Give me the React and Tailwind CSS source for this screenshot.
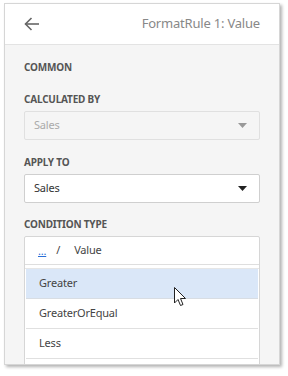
import React from "react";

const font = { fontFamily: '"Noto Sans", "Open Sans", sans-serif' };

const Caret = ({ color }) => (
  <svg width="9" height="5" viewBox="0 0 9 5">
    <polygon points="0,0 9,0 4.5,5" fill={color} />
  </svg>
);

const Label = ({ children }) => (
  <div className="h-[14px] text-[10px] leading-[14px] font-bold text-[#555] tracking-[-0.2px]">
    {children}
  </div>
);

const App = () => {
  return (
    <div
      className="w-[288px] h-[376px] bg-white pt-[3px] pl-[4px] relative overflow-hidden"
      style={font}
    >
      <div className="w-[276px] h-[362px] bg-[#f5f5f5] border border-[#d6d6d6] shadow-[2px_2px_3px_rgba(0,0,0,0.3)] flex flex-col overflow-hidden">
        {/* Header */}
        <div className="h-[41px] shrink-0 bg-white border-b border-[#e3e3e3] flex items-center justify-between pl-[19px] pr-[19px]">
          <svg width="16" height="14" viewBox="0 0 16 14" fill="none" stroke="#666" strokeWidth="1.6">
            <line x1="1.5" y1="7" x2="15" y2="7" />
            <polyline points="7.5,1 1.5,7 7.5,13" />
          </svg>
          <span className="text-[13px] tracking-[-0.2px] text-[#888]">FormatRule 1: Value</span>
        </div>

        {/* Body */}
        <div className="px-[19px] flex flex-col">
          <div className="mt-[15px]">
            <Label>COMMON</Label>
          </div>

          <div className="mt-[18px]">
            <Label>CALCULATED BY</Label>
          </div>
          <div className="mt-[5px] h-[29px] bg-[#f5f5f5] border border-[#e0e0e0] rounded-[2px] flex items-center justify-between pl-[9px] pr-[12px]">
            <span className="text-[11px] tracking-[-0.2px] text-[#aaa]">Sales</span>
            <Caret color="#999" />
          </div>

          <div className="mt-[15px]">
            <Label>APPLY TO</Label>
          </div>
          <div className="mt-[5px] h-[29px] bg-white border border-[#cfcfcf] rounded-[2px] flex items-center justify-between pl-[9px] pr-[12px]">
            <span className="text-[11px] tracking-[-0.2px] text-[#333]">Sales</span>
            <Caret color="#222" />
          </div>

          <div className="mt-[14px]">
            <Label>CONDITION TYPE</Label>
          </div>
          <div className="mt-[5px] bg-white border border-[#d6d6d6] rounded-[2px] flex flex-col">
            <div className="h-[28px] flex items-center pl-[13px] text-[11px] tracking-[-0.2px] text-[#444] border-b border-[#dedede]">
              <span className="text-[#2a6fd6] underline leading-none">...</span>
              <span className="ml-[10px]">/</span>
              <span className="ml-[14px]">Value</span>
            </div>
            <div className="h-[4px] border-b border-[#e6e6e6] bg-white" />
            <div className="mx-[1px] flex flex-col text-[11px] tracking-[-0.2px] text-[#444]">
              <div className="h-[30px] bg-[#dae7f8] border-b border-[#d8dde3] flex items-center pl-[13px]">
                Greater
              </div>
              <div className="h-[30px] border-b border-[#e0e0e0] flex items-center pl-[13px]">
                GreaterOrEqual
              </div>
              <div className="h-[30px] border-b border-[#e0e0e0] flex items-center pl-[13px]">
                Less
              </div>
              <div className="h-[30px]" />
            </div>
          </div>
        </div>
      </div>

      {/* Mouse cursor */}
      <svg
        className="absolute left-[174px] top-[287px]"
        width="13"
        height="20"
        viewBox="0 0 13 20"
      >
        <path
          d="M0.5,0.5 L0.5,16 L4,12.5 L6.5,18.5 L9,17.5 L6.5,11.5 L11.5,11.5 Z"
          fill="white"
          stroke="#222"
          strokeWidth="1"
          strokeLinejoin="round"
        />
      </svg>
    </div>
  );
};

export default App;
